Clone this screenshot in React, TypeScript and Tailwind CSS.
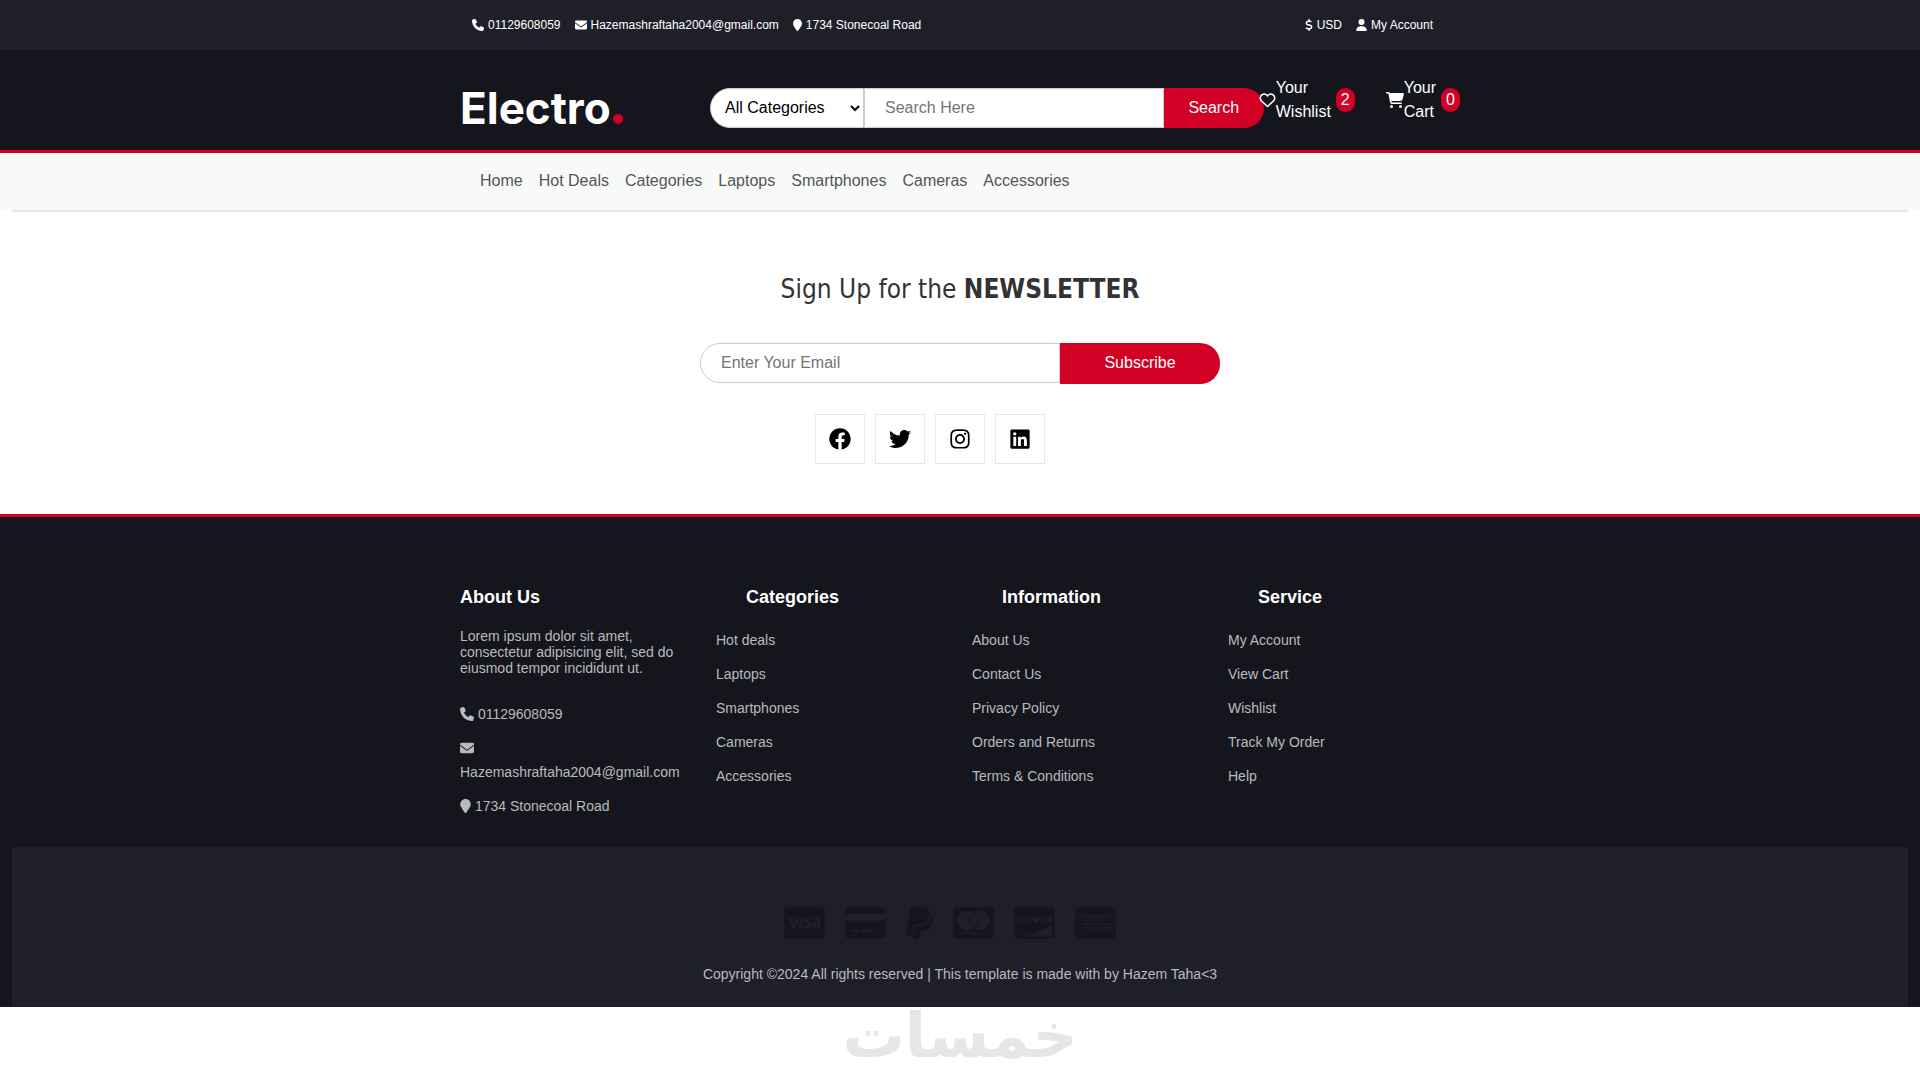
import { FaCcAmex, FaCcDiscover, FaFacebook, FaInstagram, FaLinkedin, FaTwitter } from 'react-icons/fa';
import {
  FaCartShopping,
  FaCcMastercard,
  FaCcVisa,
  FaCreditCard,
  FaDollarSign,
  FaEnvelope,
  FaLocationPin,
  FaPaypal,
  FaPhone,
  FaRegHeart,
  FaUser,
} from 'react-icons/fa6';

const navItems = ['Home', 'Hot Deals', 'Categories', 'Laptops', 'Smartphones', 'Cameras', 'Accessories'];

const topContacts = [
  { icon: FaPhone, size: 'w-3', label: '01129608059' },
  { icon: FaEnvelope, size: 'w-3', label: 'Hazemashraftaha2004@gmail.com' },
  { icon: FaLocationPin, size: 'w-[9px]', label: '1734 Stonecoal Road' },
];

const account = [
  { icon: FaDollarSign, size: 'w-2', label: 'USD' },
  { icon: FaUser, size: 'w-[11px]', label: 'My Account' },
];

const footerContacts = [
  { icon: FaPhone, size: 'w-3.5', label: '01129608059' },
  { icon: FaEnvelope, size: 'w-3.5', label: 'Hazemashraftaha2004@gmail.com' },
  { icon: FaLocationPin, size: 'w-[11px]', label: '1734 Stonecoal Road' },
];

const socials = [
  { icon: FaFacebook, label: 'Facebook' },
  { icon: FaTwitter, label: 'Twitter' },
  { icon: FaInstagram, label: 'Instagram' },
  { icon: FaLinkedin, label: 'LinkedIn' },
];

const footerColumns = [
  { title: 'Categories', links: ['Hot deals', 'Laptops', 'Smartphones', 'Cameras', 'Accessories'] },
  {
    title: 'Information',
    links: ['About Us', 'Contact Us', 'Privacy Policy', 'Orders and Returns', 'Terms & Conditions'],
  },
  { title: 'Service', links: ['My Account', 'View Cart', 'Wishlist', 'Track My Order', 'Help'] },
];

const payments = [
  { icon: FaCcVisa, size: 'w-[41px]' },
  { icon: FaCreditCard, size: 'w-[41px]' },
  { icon: FaPaypal, size: 'w-[27px]' },
  { icon: FaCcMastercard, size: 'w-[41px]' },
  { icon: FaCcDiscover, size: 'w-[41px]' },
  { icon: FaCcAmex, size: 'w-[41px]' },
];

function TopLinks({ items }: { items: typeof topContacts }) {
  return (
    <ul className="flex gap-3.5">
      {items.map(({ icon: Icon, size, label }) => (
        <li key={label}>
          <a href="#" className="flex items-center gap-1">
            <Icon className={`h-3 ${size}`} />
            {label}
          </a>
        </li>
      ))}
    </ul>
  );
}

function TopBar() {
  return (
    <div className="bg-[#1e1f29] text-xs font-medium text-white">
      <div className="mx-auto flex max-w-[1000px] justify-between py-[17px] pr-[27px] pl-3">
        <TopLinks items={topContacts} />
        <TopLinks items={account} />
      </div>
    </div>
  );
}

function Header() {
  return (
    <header className="border-b-3 border-[#d10024] bg-[#15161d]">
      <div className="mx-auto flex max-w-[1000px] items-start pt-[26px] pb-[22px]">
        <a
          href="#"
          className="mt-3 flex w-[250px] shrink-0 items-baseline gap-0.5 font-[Inter,sans-serif] text-[44px] leading-10 font-bold text-white"
        >
          Electro
          <span className="size-2.5 rounded-full bg-[#d10024]" />
        </a>
        <form className="mt-3 flex h-10 grow">
          <select
            aria-label="Category"
            className="w-[154px] rounded-l-[20px] border border-[#cccccc] bg-white pb-0.5 pl-2.5 text-black"
          >
            <option>All Categories</option>
          </select>
          <input
            type="text"
            aria-label="Search"
            placeholder="Search Here"
            className="w-0 grow border border-[#cccccc] bg-white px-5 text-black placeholder:text-[#757575]"
          />
          <button type="button" className="w-[100px] rounded-r-[20px] bg-[#d10024] text-white">
            Search
          </button>
        </form>
        <div className="relative -ml-[5px] flex gap-[31px] text-white">
          <a href="#" className="flex items-center">
            <FaRegHeart className="h-4 w-[17px]" />
            <span className="w-min">Your Wishlist</span>
            <span className="ml-[5px] rounded-[10px] bg-[#d10024] px-[5px]">2</span>
          </a>
          <a href="#" className="flex items-center">
            <FaCartShopping className="h-4 w-[18px]" />
            <span className="w-min">Your Cart</span>
            <span className="ml-[5px] rounded-[10px] bg-[#d10024] px-[5px]">0</span>
          </a>
        </div>
      </div>
    </header>
  );
}

function Nav() {
  return (
    <nav className="bg-[#f8faf9]">
      <ul className="mx-auto flex max-w-[1000px] gap-4 px-5 pt-4 pb-[17px] text-[#555555]">
        {navItems.map((item) => (
          <li key={item}>
            <a href="#">{item}</a>
          </li>
        ))}
      </ul>
    </nav>
  );
}

function Newsletter() {
  return (
    <section className="mx-3 flex flex-col items-center border-t-2 border-[#e4e7ed] pt-[57px] pb-[50px]">
      <h2 className="font-['DejaVu_Sans_Condensed','DejaVu_Sans',sans-serif] text-[26px] leading-10 text-[#333333]">
        Sign Up for the <strong>NEWSLETTER</strong>
      </h2>
      <form className="mt-[34px] flex w-full max-w-[520px] items-start">
        <input
          type="email"
          aria-label="Email"
          placeholder="Enter Your Email"
          className="h-10 w-0 grow rounded-l-[20px] border border-[#cccccc] px-5 placeholder:text-[#757575]"
        />
        <button type="button" className="h-[41px] w-40 rounded-r-[20px] bg-[#d10024] pb-0.5 text-white">
          Subscribe
        </button>
      </form>
      <ul className="mt-[30px] flex gap-2.5 pr-[60px]">
        {socials.map(({ icon: Icon, label }) => (
          <li key={label}>
            <a
              href="#"
              aria-label={label}
              className="flex size-[50px] items-center justify-center border border-[#e4e7ed] text-black"
            >
              <Icon className="size-[22px]" />
            </a>
          </li>
        ))}
      </ul>
    </section>
  );
}

function Footer() {
  return (
    <footer className="border-t-3 border-[#d10024] bg-[#15161d] text-sm text-[#b9babc]">
      <div className="mx-auto grid max-w-[1048px] grid-cols-4 pt-[66px] pb-[29px] pl-6">
        <div className="pr-5">
          <h3 className="text-lg leading-7 font-bold text-white">About Us</h3>
          <p className="mt-[17px] mb-[26px] leading-4">
            Lorem ipsum dolor sit amet, consectetur adipisicing elit, sed do eiusmod tempor incididunt ut.
          </p>
          <ul className="space-y-2.5 leading-6">
            {footerContacts.map(({ icon: Icon, size, label }) => (
              <li key={label}>
                <a href="#">
                  <Icon className={`inline h-3.5 align-[-2px] ${size}`} /> {label}
                </a>
              </li>
            ))}
          </ul>
        </div>
        {footerColumns.map(({ title, links }) => (
          <div key={title}>
            <h3 className="pl-[30px] text-lg leading-7 font-bold text-white">{title}</h3>
            <ul className="mt-[17px] space-y-2.5 leading-6">
              {links.map((link) => (
                <li key={link}>
                  <a href="#">{link}</a>
                </li>
              ))}
            </ul>
          </div>
        ))}
      </div>
      <div className="mx-3 flex flex-col items-center bg-[#1e1f29] pt-[58px] pb-[21px]">
        <ul className="flex gap-5 pr-5 text-[#15161d]">
          {payments.map(({ icon: Icon, size }, index) => (
            <li key={index}>
              <Icon className={`h-9 ${size}`} />
            </li>
          ))}
        </ul>
        <p className="mt-[21px] leading-6">
          Copyright ©2024 All rights reserved | This template is made with by Hazem Taha&lt;3
        </p>
      </div>
    </footer>
  );
}

export default function App() {
  return (
    <div className="bg-white font-['Liberation_Sans',Arial,sans-serif] text-base">
      <TopBar />
      <Header />
      <Nav />
      <Newsletter />
      <Footer />
      <p
        lang="ar"
        dir="rtl"
        className="text-center font-['DejaVu_Sans',sans-serif] text-[62px] leading-[58px] font-bold text-[#e6e6e6]"
      >
        خمسات
      </p>
    </div>
  );
}
